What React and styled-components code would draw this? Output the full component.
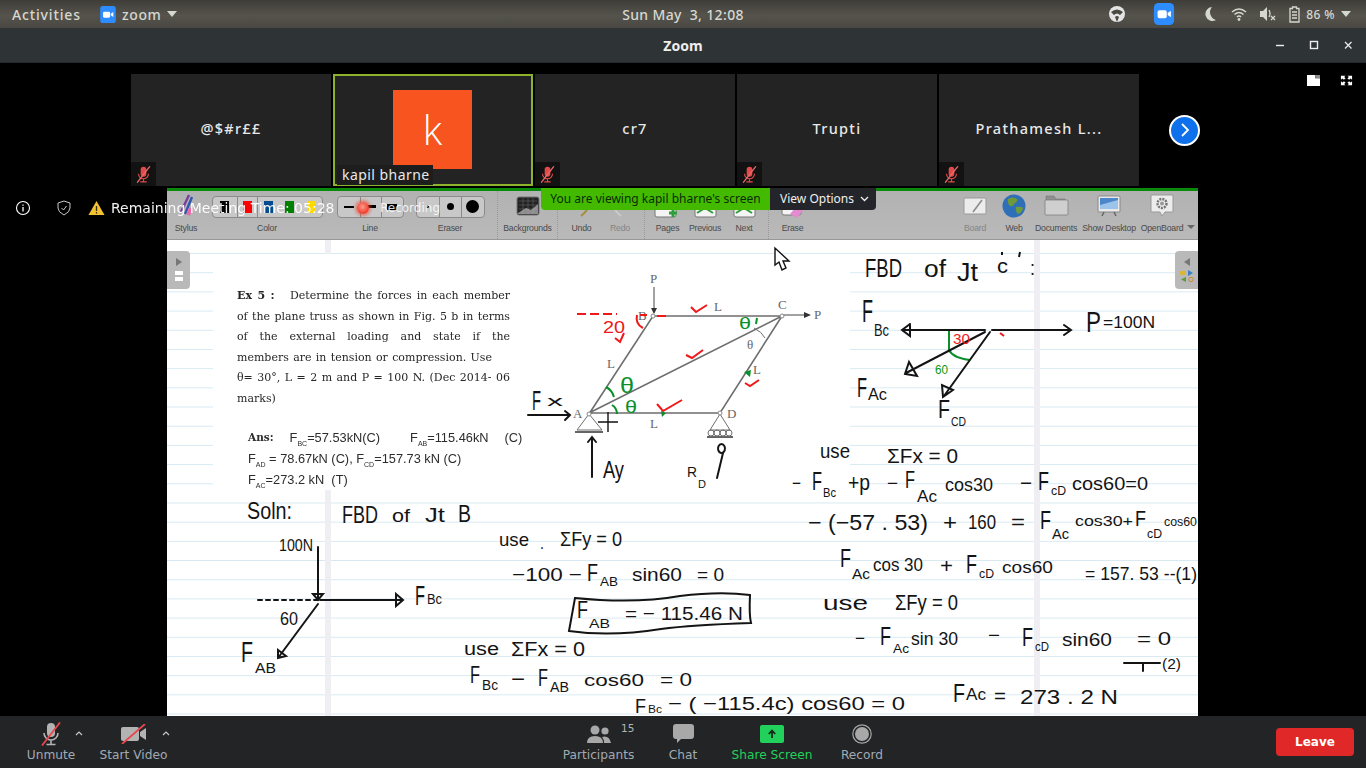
import React from 'react';
import styled, { createGlobalStyle } from 'styled-components';

const GlobalStyle = createGlobalStyle`
  html, body {
    margin: 0;
    background: #000;
    overflow: hidden;
  }
  #root {
    width: 1366px;
    height: 768px;
  }
`;

const Screen = styled.div`
  display: flex;
  flex-direction: column;
  width: 1366px;
  height: 768px;
  background: #000;
  font-family: "DejaVu Sans", sans-serif;
`;

/* gnome top bar */
const TopBar = styled.div`
  position: relative;
  display: flex;
  align-items: center;
  height: 28px;
  padding-left: 12px;
  background: linear-gradient(#3f3d38, #55534c 55%, #4a4842);
  color: #d6d8d0;
  font-family: "Noto Sans", sans-serif;
  font-size: 14px;
  font-weight: 500;
`;

const AppName = styled.span`
  margin-left: 6px;
  letter-spacing: 0.6px;
`;

const Activities = styled.span`
  width: 88px;
  letter-spacing: 0.85px;
`;

const Clock = styled.span`
  position: absolute;
  left: 0;
  right: 0;
  top: 5px;
  text-align: center;
  letter-spacing: 0.35px;
  white-space: pre;
`;

const Tray = styled.div`
  display: flex;
  align-items: center;
  margin-left: auto;
`;

const TrayPercent = styled.span`
  margin-left: 6px;
  font-size: 12px;
  letter-spacing: 0.4px;
`;

const TitleBar = styled.div`
  position: relative;
  display: flex;
  align-items: center;
  justify-content: flex-end;
  height: 35px;
  padding-right: 10px;
  gap: 19px;
  background: #2e3436;
  color: #eeeeec;
  border-bottom: 1px solid #23282a;
  box-sizing: border-box;
`;

const WindowTitle = styled.span`
  position: absolute;
  left: 0;
  right: 0;
  text-align: center;
  font-family: "Noto Sans", sans-serif;
  font-size: 14px;
  font-weight: 700;
`;

/* meeting area */
const Meeting = styled.div`
  position: relative;
  flex: 1;
  display: flex;
  flex-direction: column;
  min-height: 0;
`;

const Strip = styled.div`
  display: flex;
  align-items: center;
  gap: 2px;
  height: 112px;
  margin-top: 11px;
  padding-left: 131px;
`;

const Tile = styled.div`
  position: relative;
  display: flex;
  justify-content: center;
  align-items: ${({ $active }) => ($active ? 'flex-start' : 'center')};
  width: 200px;
  height: 112px;
  box-sizing: border-box;
  background: #232323;
  border: ${({ $active }) => ($active ? '2px solid #8db32c' : 'none')};
  padding: ${({ $active }) => ($active ? '14px 1px 0 0' : '0 0 4px 0')};
  color: #e8e8e8;
  font-size: 14.5px;
  font-weight: 500;
  font-family: "Noto Sans", sans-serif;
  letter-spacing: 1.3px;
`;

const Avatar = styled.div`
  display: flex;
  align-items: center;
  justify-content: center;
  width: 79px;
  height: 79px;
  background: #f7541f;
  color: #fff;
  font-family: "Open Sans", sans-serif;
  font-size: 40px;
  font-weight: 300;
  letter-spacing: 0;
`;

const NameTag = styled.span`
  position: absolute;
  left: 2px;
  bottom: -1px;
  padding: 0 3px 0 5px;
  height: 20px;
  line-height: 20px;
  background: #1d1d1d;
  font-weight: 400;
  font-size: 14px;
  letter-spacing: 0.45px;
`;

const MuteBadge = styled.div`
  position: absolute;
  left: 0;
  bottom: 0;
  display: flex;
  align-items: center;
  justify-content: center;
  width: 25px;
  height: 24px;
  background: #121212;
`;

const NextButton = styled.div`
  display: flex;
  align-items: center;
  justify-content: center;
  width: 31px;
  height: 31px;
  margin-left: 28px;
  border-radius: 50%;
  border: 2px solid #fff;
  box-sizing: border-box;
  background: #0e71eb;
`;

const ViewIcons = styled.div`
  display: flex;
  gap: 20px;
  align-self: flex-start;
  margin-left: auto;
  margin-right: 13px;
  margin-top: 1px;
`;

/* shared screen */
const Share = styled.div`
  position: relative;
  flex: 1;
  display: flex;
  flex-direction: column;
  width: 1031px;
  margin: 2px 0 0 167px;
  border-top: 3px solid #0a8a0a;
  min-height: 0;
`;

const Banner = styled.div`
  position: absolute;
  left: 374px;
  top: -3px;
  display: flex;
  height: 22px;
  z-index: 3;
  font-family: "Noto Sans", sans-serif;
  font-size: 12px;
  line-height: 22px;
`;

const BannerText = styled.span`
  width: 229px;
  text-align: center;
  background: #43ba00;
  color: #0c2d00;
  border-radius: 0 0 0 4px;
`;

const BannerAction = styled.span`
  display: flex;
  align-items: center;
  gap: 6px;
  width: 106px;
  padding-left: 10px;
  box-sizing: border-box;
  background: #23252a;
  color: #f0f0f0;
  border-radius: 0 0 4px 0;
`;

const Toolbar = styled.div`
  display: flex;
  height: 48px;
  background: linear-gradient(#b2b2b2, #b9b9b9);
  border-bottom: 1px solid #979797;
  flex-shrink: 0;
`;

const Tool = styled.div`
  display: flex;
  flex-direction: column;
  align-items: center;
  flex-shrink: 0;
  width: ${({ $w }) => $w}px;
  margin-left: ${({ $ml }) => $ml || 0}px;
  box-sizing: border-box;
  border-left: ${({ $divider }) => ($divider ? '1px dotted #999' : 'none')};
`;

const ToolIcon = styled.div`
  display: flex;
  align-items: center;
  justify-content: center;
  height: 29px;
  margin-bottom: 2px;
`;

const ToolLabel = styled.span`
  font-family: "Liberation Sans", sans-serif;
  font-size: 8.7px;
  letter-spacing: -0.2px;
  line-height: 12px;
  white-space: nowrap;
  color: ${({ $dim }) => ($dim ? '#858585' : '#4a4a4a')};
`;

const RightTools = styled.div`
  display: flex;
  margin-left: auto;
`;

const MoreArrow = styled.span`
  align-self: flex-end;
  width: 0;
  height: 0;
  margin: 0 3px 10px 2px;
  border: 4px solid transparent;
  border-top: 4px solid #666;
  border-bottom: none;
`;

const BtnGroup = styled.div`
  display: flex;
  height: 22px;
  margin-top: 2px;
  box-sizing: border-box;
  border: 1px solid #8b8b8b;
  border-radius: 4px;
  background: #c8c8c8;
`;

const BtnSeg = styled.div`
  display: flex;
  align-items: center;
  justify-content: center;
  width: ${({ $w }) => $w}px;
  box-sizing: border-box;
  border-left: ${({ $plain }) => ($plain ? 'none' : '1px solid #8b8b8b')};
`;

const Swatch = styled.span`
  width: 9px;
  height: 12px;
  background: ${({ $c }) => $c};
`;

const Dot = styled.span`
  width: ${({ $s }) => $s}px;
  height: ${({ $s }) => $s}px;
  border-radius: 50%;
  background: #000;
`;

const Stroke = styled.span`
  width: ${({ $w }) => $w}px;
  height: ${({ $h }) => $h}px;
  background: #000;
`;

const Board = styled.div`
  position: relative;
  flex: 1;
  overflow: hidden;
  background-color: #fff;
  background-image: linear-gradient(#fff 18.2px, #d8e9f2 18.2px);
  background-size: 100% 19.2px;
  background-position: 0 -5.2px;
`;

const PageBand = styled.div`
  position: absolute;
  top: 0;
  bottom: 0;
  left: ${({ $x }) => $x}px;
  width: 6px;
  background: #efeef3;
`;

const SidePanelTab = styled.div`
  position: absolute;
  top: 11px;
  ${({ $side }) => $side}: 0;
  display: flex;
  flex-direction: column;
  align-items: center;
  justify-content: center;
  gap: 4px;
  width: 23px;
  height: 38px;
  background: #b9b9b9;
  border-radius: ${({ $side }) => ($side === 'left' ? '0 4px 4px 0' : '4px 0 0 4px')};
`;

/* page from the lecture notes, pasted on the board */
const DocPatch = styled.div`
  position: absolute;
  left: 46px;
  top: 14px;
  width: 637px;
  height: 236px;
  background: #fff;
`;

const DocText = styled.div`
  position: absolute;
  left: 24px;
  top: 32px;
  width: 273px;
  color: #262626;
  font-family: "DejaVu Serif", serif;
  font-size: 11px;
  filter: blur(0.4px);
`;

const DocLine = styled.div`
  height: 20.6px;
  line-height: 20.6px;
  white-space: nowrap;
  text-align-last: ${({ $free }) => ($free ? 'left' : 'justify')};
  width: ${({ $w }) => $w || 273}px;
`;

const AnsBlock = styled.div`
  position: absolute;
  left: 35px;
  top: 173px;
  color: #2c2c2c;
  font-family: "Liberation Sans", sans-serif;
  font-size: 12.8px;
  filter: blur(0.4px);
`;

const AnsLine = styled.div`
  display: flex;
  height: 21px;
  line-height: 21px;
  white-space: nowrap;
  gap: ${({ $gap }) => $gap || 0}px;
`;

const AnsTag = styled.b`
  font-family: "DejaVu Serif", serif;
  font-size: 10.5px;
`;

const AnsForce = styled.span`
  margin-left: ${({ $ml }) => $ml || 0}px;
`;

const Sub = styled.sub`
  font-size: 7px;
  line-height: 0;
`;

const Canvas = styled.svg`
  position: absolute;
  left: 0;
  top: 0;
  width: 1031px;
  height: 476px;
`;

const Ink = styled.text`
  font-family: "Liberation Sans", sans-serif;
  fill: ${({ $c }) => $c || '#141414'};
`;

const PrintLabel = styled.text`
  font-family: "Liberation Serif", serif;
  font-size: 13px;
  fill: #666;
`;

/* overlay row with the meeting info */
const StatusRow = styled.div`
  position: absolute;
  left: 15px;
  top: 135px;
  display: flex;
  align-items: center;
  height: 20px;
  z-index: 2;
  color: #fff;
  font-size: 14px;
  white-space: nowrap;
`;

const StatusText = styled.span`
  margin-left: 6px;
  width: 224px;
  opacity: 0.95;
`;

const RecordDot = styled.span`
  width: 12px;
  height: 12px;
  margin-left: 22px;
  border-radius: 50%;
  background: radial-gradient(circle at 45% 40%, #ff9a8a, #f03a28 70%);
  box-shadow: 0 0 3px 2px rgba(240, 70, 50, 0.55);
`;

const RecordText = styled.span`
  margin-left: 11px;
  font-size: 12px;
  color: rgba(255, 255, 255, 0.85);
`;

/* bottom controls */
const ControlBar = styled.div`
  display: flex;
  height: 52px;
  padding-left: 27px;
  padding-right: 12px;
  background: #232426;
  flex-shrink: 0;
`;

const Control = styled.div`
  position: relative;
  display: flex;
  flex-direction: column;
  align-items: center;
  width: ${({ $w }) => $w}px;
  margin-left: ${({ $ml }) => $ml || 0}px;
  color: ${({ $green }) => ($green ? '#21d15b' : '#a2aab2')};
  font-size: 12.2px;
  white-space: nowrap;
`;

const ControlIcon = styled.div`
  display: flex;
  align-items: center;
  justify-content: center;
  height: 31px;
  margin-bottom: 1px;
  padding-top: 4px;
  box-sizing: border-box;
`;

const Caret = styled.svg`
  position: absolute;
  top: 15px;
  right: ${({ $r }) => $r}px;
`;

const Count = styled.span`
  position: absolute;
  left: 58px;
  top: 6px;
  font-size: 10.5px;
  color: #b4b4b4;
`;

const LeaveButton = styled.button`
  align-self: center;
  width: 78px;
  height: 28px;
  margin-left: auto;
  border: none;
  border-radius: 4px;
  background: #e02828;
  color: #fff;
  font-family: "DejaVu Sans", sans-serif;
  font-size: 12px;
  font-weight: 700;
`;

const MicGlyph = ({ size = 24, color = '#b3b3b3', slash = '#e9474d' }) => (
  <svg width={size} height={size} viewBox="0 0 24 24">
    <rect x="8" y="1" width="8" height="14" rx="4" fill={color} />
    <path d="M5 11a7 7 0 0 0 14 0M12 18v4M7.5 22.5h9" fill="none" stroke={color} strokeWidth="1.6" />
    <path d="M3 23.5 L21 0.5" stroke={slash} strokeWidth="1.8" />
  </svg>
);

const ZoomGlyph = ({ w, h, r }) => (
  <svg width={w} height={h} viewBox="0 0 22 24">
    <rect width="22" height="24" rx={r} fill="#2d8cff" />
    <rect x="4" y="8" width="10" height="8.5" rx="2" fill="#fff" />
    <path d="M15 11l3.5-2.5v7L15 13z" fill="#fff" />
  </svg>
);

/* the page icons of the toolbar, half hidden by the green banner */
const PageGlyph = ({ w = 23, accent = '#2f9e3a' }) => (
  <svg width={w} height="26" viewBox="0 0 23 26">
    <rect x="1" y="3" width="21" height="21" rx="2" fill="#f4f4f4" stroke="#777" />
    <path d="M3 20l8-5l8 5" fill="none" stroke={accent} strokeWidth="2" />
  </svg>
);

const handwriting = [
  // FBD of joint C
  { t: 'FBD', x: 865, y: 277, w: 37, s: 25 },
  { t: 'of', x: 924, y: 277, w: 22, s: 23 },
  { t: 'Jt', x: 957, y: 281, w: 21, s: 25 },
  { t: 'c', x: 997, y: 273, w: 11, s: 20 },
  { t: ':', x: 1030, y: 275, w: 5, s: 20 },
  { t: 'F', x: 862, y: 322, w: 11, s: 32 },
  { t: 'Bc', x: 874, y: 336, w: 15, s: 16 },
  { t: 'P', x: 1086, y: 332, w: 15, s: 30 },
  { t: '=100N', x: 1103, y: 328, w: 52, s: 16 },
  { t: 'F', x: 857, y: 397, w: 10, s: 28 },
  { t: 'Ac', x: 868, y: 400, w: 19, s: 17 },
  { t: 'F', x: 938, y: 418, w: 12, s: 26 },
  { t: 'CD', x: 951, y: 426, w: 15, s: 13 },
  { t: '30', x: 953, y: 344, w: 17, s: 14, c: '#f01818' },
  { t: '60', x: 935, y: 374, w: 13, s: 12, c: '#0a9a0a' },
  // sum of forces in x at C
  { t: 'use', x: 820, y: 458, w: 30, s: 20 },
  { t: 'ΣFx = 0', x: 887, y: 463, w: 71, s: 20 },
  { t: '−', x: 792, y: 490, w: 9, s: 20 },
  { t: 'F', x: 812, y: 490, w: 10, s: 26 },
  { t: 'Bc', x: 823, y: 497, w: 13, s: 13 },
  { t: '+p', x: 848, y: 490, w: 22, s: 22 },
  { t: '−', x: 887, y: 490, w: 11, s: 20 },
  { t: 'F', x: 905, y: 488, w: 10, s: 24 },
  { t: 'Ac', x: 917, y: 502, w: 20, s: 16 },
  { t: 'cos30', x: 945, y: 491, w: 48, s: 19 },
  { t: '−', x: 1020, y: 489, w: 12, s: 18 },
  { t: 'F', x: 1038, y: 490, w: 11, s: 26 },
  { t: 'cD', x: 1051, y: 495, w: 15, s: 13 },
  { t: 'cos60=0', x: 1072, y: 490, w: 76, s: 18 },
  { t: '− (−57 . 53)', x: 808, y: 530, w: 120, s: 22 },
  { t: '+', x: 943, y: 530, w: 14, s: 22 },
  { t: '160', x: 968, y: 529, w: 28, s: 20 },
  { t: '=', x: 1011, y: 529, w: 14, s: 20 },
  { t: 'F', x: 1040, y: 529, w: 11, s: 26 },
  { t: 'Ac', x: 1052, y: 539, w: 17, s: 15 },
  { t: 'cos30+', x: 1075, y: 526, w: 58, s: 15 },
  { t: 'F', x: 1135, y: 526, w: 11, s: 22 },
  { t: 'cD', x: 1147, y: 538, w: 15, s: 13 },
  { t: 'cos60', x: 1164, y: 526, w: 33, s: 13 },
  { t: 'F', x: 840, y: 567, w: 11, s: 26 },
  { t: 'Ac', x: 852, y: 579, w: 18, s: 15 },
  { t: 'cos 30', x: 873, y: 571, w: 50, s: 18 },
  { t: '+', x: 940, y: 573, w: 13, s: 20 },
  { t: 'F', x: 966, y: 573, w: 11, s: 26 },
  { t: 'cD', x: 979, y: 578, w: 15, s: 13 },
  { t: 'cos60', x: 1002, y: 573, w: 51, s: 17 },
  { t: '= 157. 53 --(1)', x: 1085, y: 580, w: 112, s: 19 },
  { t: 'use', x: 823, y: 610, w: 45, s: 20 },
  { t: 'ΣFy = 0', x: 895, y: 610, w: 63, s: 22 },
  { t: '−', x: 855, y: 645, w: 10, s: 20 },
  { t: 'F', x: 880, y: 645, w: 11, s: 26 },
  { t: 'Ac', x: 893, y: 653, w: 16, s: 13 },
  { t: 'sin 30', x: 911, y: 645, w: 47, s: 19 },
  { t: '−', x: 988, y: 642, w: 12, s: 20 },
  { t: 'F', x: 1022, y: 646, w: 11, s: 26 },
  { t: 'cD', x: 1035, y: 651, w: 14, s: 13 },
  { t: 'sin60', x: 1062, y: 646, w: 50, s: 18 },
  { t: '= 0', x: 1137, y: 645, w: 34, s: 18 },
  { t: '(2)', x: 1162, y: 669, w: 19, s: 15 },
  { t: 'F', x: 953, y: 702, w: 12, s: 26 },
  { t: 'Ac', x: 966, y: 700, w: 20, s: 16 },
  { t: '=', x: 994, y: 703, w: 12, s: 20 },
  { t: '273 . 2 N', x: 1020, y: 704, w: 98, s: 21 },
  // FBD of joint B
  { t: 'Soln:', x: 247, y: 519, w: 45, s: 24 },
  { t: 'FBD', x: 342, y: 523, w: 36, s: 24 },
  { t: 'of', x: 392, y: 522, w: 18, s: 18 },
  { t: 'Jt', x: 425, y: 522, w: 20, s: 20 },
  { t: 'B', x: 458, y: 522, w: 13, s: 24 },
  { t: '100N', x: 279, y: 551, w: 34, s: 17 },
  { t: 'F', x: 415, y: 605, w: 10, s: 28 },
  { t: 'Bc', x: 427, y: 604, w: 15, s: 14 },
  { t: '60', x: 280, y: 625, w: 18, s: 18 },
  { t: 'F', x: 241, y: 662, w: 12, s: 30 },
  { t: 'AB', x: 255, y: 673, w: 21, s: 15 },
  { t: 'use', x: 499, y: 546, w: 30, s: 19 },
  { t: '.', x: 540, y: 549, w: 4, s: 16 },
  { t: 'ΣFy = 0', x: 560, y: 546, w: 62, s: 20 },
  { t: '−100 −', x: 512, y: 581, w: 70, s: 19 },
  { t: 'F', x: 587, y: 581, w: 11, s: 24 },
  { t: 'AB', x: 600, y: 586, w: 18, s: 13 },
  { t: 'sin60', x: 632, y: 581, w: 50, s: 19 },
  { t: '= 0', x: 697, y: 581, w: 27, s: 18 },
  { t: 'F', x: 577, y: 618, w: 11, s: 24 },
  { t: 'AB', x: 589, y: 628, w: 21, s: 13 },
  { t: '= − 115.46 N', x: 625, y: 620, w: 118, s: 19 },
  { t: 'use', x: 464, y: 655, w: 35, s: 18 },
  { t: 'ΣFx = 0', x: 511, y: 656, w: 74, s: 21 },
  { t: 'F', x: 470, y: 683, w: 10, s: 24 },
  { t: 'Bc', x: 482, y: 690, w: 16, s: 15 },
  { t: '−', x: 511, y: 685, w: 14, s: 18 },
  { t: 'F', x: 538, y: 686, w: 10, s: 24 },
  { t: 'AB', x: 550, y: 692, w: 19, s: 14 },
  { t: 'cos60', x: 584, y: 686, w: 60, s: 17 },
  { t: '= 0', x: 660, y: 686, w: 32, s: 18 },
  { t: 'F', x: 635, y: 713, w: 11, s: 21 },
  { t: 'Bc', x: 648, y: 713, w: 14, s: 11 },
  { t: '− ( −115.4c) cos60 = 0', x: 668, y: 710, w: 237, s: 19 },
  // labels round the printed truss
  { t: 'F', x: 532, y: 410, w: 9, s: 28 },
  { t: 'x', x: 547, y: 406, w: 16, s: 14 },
  { t: 'Ay', x: 603, y: 478, w: 21, s: 24 },
  { t: 'R', x: 687, y: 477, w: 10, s: 14 },
  { t: 'D', x: 698, y: 488, w: 8, s: 11 },
  { t: '20', x: 603, y: 333, w: 22, s: 17, c: '#f01818' },
  { t: 'θ', x: 620, y: 393, w: 14, s: 22, c: '#0a8f2a' },
  { t: 'θ', x: 625, y: 413, w: 12, s: 18, c: '#0a8f2a' },
  { t: 'θ', x: 739, y: 329, w: 12, s: 17, c: '#0a8f2a' },
];

const printLabels = [
  ['P', 650, 283], ['P', 814, 319], ['A', 573, 418], ['B', 638, 320],
  ['C', 778, 309], ['D', 727, 418], ['L', 607, 368], ['L', 714, 311],
  ['L', 753, 374], ['L', 650, 428], ['θ', 747, 349],
];

const redMarks = [
  'M691 307l5 5l11-7', 'M686 355l6 3l11-8', 'M657 404l6 7l19-11',
  'M745 383l5 3l9-6', 'M615 338l5 4l4-9', 'M637 315q-2 9 6 13',
  'M1000 333l4 3',
];

const BoardDrawing = () => (
  <Canvas viewBox="167 240 1031 476">
    {/* printed truss */}
    <g stroke="#6e6e6e" strokeWidth="1.6" fill="none">
      <path d="M589 414L653 316H782L720 413H589L782 316" />
      <path d="M589 414l-12 16h25zM720 414l-10 16h20z" strokeWidth="1" />
      <path d="M575 432h28M707 437h26" stroke="#333" strokeWidth="1.4" />
      <path d="M754 328q8 4 11 10" strokeWidth="1" />
      <path d="M654 287v21M782 315h22" stroke="#444" strokeWidth="1" />
      <circle cx="711" cy="433" r="3" strokeWidth="1" />
      <circle cx="717" cy="433" r="3" strokeWidth="1" />
      <circle cx="723" cy="433" r="3" strokeWidth="1" />
      <circle cx="729" cy="433" r="3" strokeWidth="1" />
    </g>
    <path d="M654 314l-3-6h6zM811 315l-7-3v6z" fill="#333" />
    <g fill="#fff" stroke="#888">
      <circle cx="589" cy="414" r="2" />
      <circle cx="653" cy="316" r="2" />
      <circle cx="782" cy="316" r="2" />
      <circle cx="720" cy="413" r="2" />
    </g>
    {printLabels.map(([t, x, y], i) => (
      <PrintLabel key={i} x={x} y={y}>{t}</PrintLabel>
    ))}

    {/* red and green marks on the printed figure */}
    <g stroke="#f01818" strokeWidth="2" fill="none">
      {redMarks.map((d) => <path key={d} d={d} />)}
      <path d="M577 314h40" strokeDasharray="9 4" />
      <path d="M640 315h7M657 316h9" />
    </g>
    <g stroke="#0a8f2a" strokeWidth="2" fill="none">
      <path d="M606 387q6 3 8 10M612 405q5 3 5 9M757 318l-1 6" />
      <path d="M949 330v20q4 8 21 10" />
    </g>
    <path d="M744 372l7-2l-1 7zM661 411l5 2l-4 4z" fill="#0a8f2a" />

    {/* black pen strokes */}
    <g stroke="#141414" strokeWidth="2" fill="none" strokeLinecap="round">
      <path d="M528 415h42M565 411l5 4l-5 5" />
      <path d="M592 477V438M588 442l4-5l4 5" />
      <path d="M717 478l6-25M722 453a3.5 4.5 0 1 0-1 0" />
      <path d="M985 330H902M910 324l-8 6l8 6v-12" />
      <path d="M992 330h78M1064 325l7 5l-7 5" />
      <path d="M985 332l-79 41M909 362l-4 12l12 2z" />
      <path d="M990 332l-46 64M942 385l1 12l10-7z" />
      <path d="M318 547v52M313 594l5 6l5-6z" />
      <path d="M320 600h82M396 594l7 6l-7 6z" />
      <path d="M258 600h60" strokeDasharray="4 4" />
      <path d="M318 604l-40 54M278 650v8l8-2z" />
      <path d="M575 598q60 6 105-2q40-5 70-1q-1 20 1 28q-60 2-90 6q-50 8-92 2z" />
      <path d="M1124 663h36M1143 664v7" />
    </g>
    <path d="M1002 252v3M1020 252l-1 5" stroke="#141414" strokeWidth="2" />

    {handwriting.map(({ t, x, y, w, s, c }, i) => (
      <Ink key={i} x={x} y={y} fontSize={s} textLength={w} lengthAdjust="spacingAndGlyphs" $c={c}>
        {t}
      </Ink>
    ))}

    {/* tool cursor and mouse pointer */}
    <path d="M608 412v20M598 422h20" stroke="#111" strokeWidth="1.4" />
    <path d="M775 248v17l4-3l3 8l4-2l-3-7h6z" fill="#fff" stroke="#111" strokeWidth="1.4" />
  </Canvas>
);

const thumbs = ['@$#r££', null, 'cr7', 'Trupti', 'Prathamesh L...'];

const App = () => (
  <Screen>
    <GlobalStyle />
    <TopBar>
      <Activities>Activities</Activities>
      <ZoomGlyph w={16} h={17} r={4} />
      <AppName>zoom</AppName>
      <svg width="10" height="6" style={{ marginLeft: 6 }}>
        <path d="M0 0h10L5 6z" fill="#d6d8d0" />
      </svg>
      <Clock>Sun May  3, 12:08</Clock>
      <Tray>
        <svg width="18" height="18" viewBox="0 0 18 18" style={{ marginRight: 27 }}>
          <circle cx="9" cy="9" r="8" fill="#e4e4e4" />
          <path d="M3 7q6-5 12 0l-3 3q-3-3-6 0zM7 12q2-2 4 0l-2 5z" fill="#4a4842" />
        </svg>
        <ZoomGlyph w={22} h={22} r={5} />
        <svg width="14" height="16" viewBox="0 0 14 16" style={{ marginLeft: 28 }}>
          <path d="M9 1a7 7 0 1 0 4 13A8 8 0 0 1 9 1z" fill="#d6d8d0" />
        </svg>
        <svg width="16" height="14" viewBox="0 0 16 14" style={{ marginLeft: 14 }}>
          <path d="M1 5q7-6 14 0M3.5 7.5q4.5-4 9 0M6 10q2-2 4 0" fill="none" stroke="#d6d8d0" strokeWidth="1.6" />
          <circle cx="8" cy="12.5" r="1.4" fill="#d6d8d0" />
        </svg>
        <svg width="18" height="16" viewBox="0 0 18 16" style={{ marginLeft: 12 }}>
          <path d="M1 5h3l4-4v14l-4-4H1z" fill="#d6d8d0" />
          <path d="M10 4q2 4 0 7M12 10l4 4M16 10l-4 4" fill="none" stroke="#d6d8d0" strokeWidth="1.3" />
        </svg>
        <svg width="11" height="17" viewBox="0 0 11 17" style={{ marginLeft: 12 }}>
          <path d="M3.5 1h4v1.5H10V16H1V2.5h2.5z" fill="none" stroke="#d6d8d0" strokeWidth="1.3" />
          <path d="M3 6h5M3 9h5M3 12h5" stroke="#d6d8d0" strokeWidth="1.6" />
        </svg>
        <TrayPercent>86 %</TrayPercent>
        <svg width="10" height="6" style={{ marginLeft: 6, marginRight: 15 }}>
          <path d="M0 0h10L5 6z" fill="#d6d8d0" />
        </svg>
      </Tray>
    </TopBar>

    <TitleBar>
      <WindowTitle>Zoom</WindowTitle>
      <svg width="15" height="15" viewBox="0 0 15 15"><path d="M3 7.5h8" stroke="#eee" strokeWidth="1.4" /></svg>
      <svg width="15" height="15" viewBox="0 0 15 15"><rect x="3.5" y="3.5" width="7" height="7" fill="none" stroke="#eee" strokeWidth="1.4" /></svg>
      <svg width="15" height="15" viewBox="0 0 15 15"><path d="M4 4l6.5 6.5M10.5 4L4 10.5" stroke="#eee" strokeWidth="1.2" /></svg>
    </TitleBar>

    <Meeting>
      <Strip>
        {thumbs.map((name, i) =>
          name ? (
            <Tile key={i}>
              {name}
              <MuteBadge>
                <MicGlyph size={17} color="#e04a4a" slash="#ef6a6a" />
              </MuteBadge>
            </Tile>
          ) : (
            <Tile key={i} $active>
              <Avatar>k</Avatar>
              <NameTag>kapil bharne</NameTag>
            </Tile>
          ),
        )}
        <NextButton>
          <svg width="12" height="16" viewBox="0 0 12 16">
            <path d="M3 2l6 6l-6 6" fill="none" stroke="#fff" strokeWidth="1.8" />
          </svg>
        </NextButton>
        <ViewIcons>
          <svg width="13" height="11" viewBox="0 0 14 14" preserveAspectRatio="none">
            <path d="M0 0h9v4h5v10H0z" fill="#fff" />
            <rect x="9" y="0" width="5" height="4" fill="#8c8c8c" />
          </svg>
          <svg width="13" height="11" viewBox="0 0 14 14" fill="#fff" preserveAspectRatio="none">
            <path d="M1 1h5L4.4 2.6L6 4.2L4.2 6L2.6 4.4L1 6zM13 1v5L11.4 4.4L9.8 6L8 4.2L9.6 2.6L8 1zM1 13V8l1.6 1.6L4.2 8L6 9.8L4.4 11.4L6 13zM13 13H8l1.6-1.6L8 9.8L9.8 8l1.6 1.6L13 8z" />
          </svg>
        </ViewIcons>
      </Strip>

      <StatusRow>
        <svg width="16" height="16" viewBox="0 0 16 16" fill="none" stroke="#fff">
          <circle cx="8" cy="8" r="6.5" strokeWidth="1.1" />
          <path d="M8 7v4.5M8 4.5v1.3" strokeWidth="1.3" />
        </svg>
        <svg width="14" height="16" viewBox="0 0 14 16" fill="none" stroke="#c8c8c8" strokeWidth="1" style={{ marginLeft: 26 }}>
          <path d="M7 1l6 2v5q0 4-6 7q-6-3-6-7V3z" />
          <path d="M4.5 8l2 2l3-4" />
        </svg>
        <svg width="17" height="16" viewBox="0 0 17 16" style={{ marginLeft: 17 }}>
          <path d="M8.5 1L16.5 15H.5z" fill="#f2c230" />
          <path d="M8.5 6v5M8.5 12v1.6" stroke="#3a2c00" strokeWidth="1.3" />
        </svg>
        <StatusText>Remaining Meeting Time: 05:28</StatusText>
        <RecordDot />
        <RecordText>Recording</RecordText>
      </StatusRow>

      <Share>
        <Banner>
          <BannerText>You are viewing kapil bharne's screen</BannerText>
          <BannerAction>
            View Options
            <svg width="9" height="6" viewBox="0 0 9 6">
              <path d="M1 1l3.5 3.5L8 1" fill="none" stroke="#f0f0f0" strokeWidth="1.3" />
            </svg>
          </BannerAction>
        </Banner>

        <Toolbar>
          <Tool $w={38}>
            <ToolIcon>
              <svg width="24" height="27" viewBox="0 0 24 27" fill="none" strokeWidth="2.4">
                <path d="M7 20L15 3" stroke="#7a3f9a" />
                <path d="M11 22L18 5" stroke="#3058b0" />
                <path d="M14 23l3-7" stroke="#e86aa6" strokeWidth="4" />
              </svg>
            </ToolIcon>
            <ToolLabel>Stylus</ToolLabel>
          </Tool>
          <Tool $w={120} $ml={2}>
            <ToolIcon>
              <BtnGroup>
                <BtnSeg $w={24} $plain><Swatch $c="#000" /></BtnSeg>
                <BtnSeg $w={20}><Swatch $c="#f00" /></BtnSeg>
                <BtnSeg $w={22}><Swatch $c="#004a8f" /></BtnSeg>
                <BtnSeg $w={22} $plain><Swatch $c="#008000" /></BtnSeg>
                <BtnSeg $w={21} $plain><Swatch $c="#ffd800" /></BtnSeg>
              </BtnGroup>
            </ToolIcon>
            <ToolLabel>Color</ToolLabel>
          </Tool>
          <Tool $w={78} $ml={4}>
            <ToolIcon>
              <BtnGroup>
                <BtnSeg $w={22} $plain><Stroke $w={10} $h={2} /></BtnSeg>
                <BtnSeg $w={21}><Stroke $w={10} $h={3} /></BtnSeg>
                <BtnSeg $w={22}><Stroke $w={10} $h={6} /></BtnSeg>
              </BtnGroup>
            </ToolIcon>
            <ToolLabel>Line</ToolLabel>
          </Tool>
          <Tool $w={74} $ml={4}>
            <ToolIcon>
              <BtnGroup>
                <BtnSeg $w={22} $plain><Dot $s={3} /></BtnSeg>
                <BtnSeg $w={22}><Dot $s={7} /></BtnSeg>
                <BtnSeg $w={23}><Dot $s={13} /></BtnSeg>
              </BtnGroup>
            </ToolIcon>
            <ToolLabel>Eraser</ToolLabel>
          </Tool>
          <Tool $w={60} $ml={10} $divider>
            <ToolIcon>
              <svg width="24" height="20" viewBox="0 0 24 20">
                <rect x="1" y="1" width="22" height="18" rx="2" fill="#222" stroke="#777" />
                <path d="M3 5h18M3 9h18M3 13h18M7 2v16M12 2v16M17 2v16" stroke="#666" strokeWidth="0.6" />
                <path d="M2 17l8-5l5 2l7-6v10H2z" fill="#bbb" opacity="0.7" />
              </svg>
            </ToolIcon>
            <ToolLabel>Backgrounds</ToolLabel>
          </Tool>
          <Tool $w={48} $divider>
            <ToolIcon>
              <svg width="24" height="26" viewBox="0 0 24 26">
                <path d="M18 10q2 6-7 13" fill="none" stroke="#a88f3c" strokeWidth="2" />
              </svg>
            </ToolIcon>
            <ToolLabel>Undo</ToolLabel>
          </Tool>
          <Tool $w={30}>
            <ToolIcon>
              <svg width="24" height="26" viewBox="0 0 24 26">
                <path d="M6 10q-2 6 7 13" fill="none" stroke="#c9c9c9" strokeWidth="2" />
              </svg>
            </ToolIcon>
            <ToolLabel $dim>Redo</ToolLabel>
          </Tool>
          <Tool $w={46} $ml={9} $divider>
            <ToolIcon>
              <svg width="27" height="26" viewBox="0 0 27 26">
                <rect x="1" y="3" width="21" height="21" rx="2" fill="#f4f4f4" stroke="#777" />
                <path d="M19 16v8M15 20h8" stroke="#2f9e3a" strokeWidth="3" />
              </svg>
            </ToolIcon>
            <ToolLabel>Pages</ToolLabel>
          </Tool>
          <Tool $w={30}>
            <ToolIcon><PageGlyph /></ToolIcon>
            <ToolLabel>Previous</ToolLabel>
          </Tool>
          <Tool $w={48}>
            <ToolIcon><PageGlyph /></ToolIcon>
            <ToolLabel>Next</ToolLabel>
          </Tool>
          <Tool $w={48} $divider>
            <ToolIcon>
              <svg width="24" height="26" viewBox="0 0 24 26">
                <rect x="1" y="3" width="19" height="19" rx="2" fill="#f4f4f4" stroke="#777" />
                <path d="M15 14l7 3l-6 8l-7-4z" fill="#e58ad0" />
              </svg>
            </ToolIcon>
            <ToolLabel>Erase</ToolLabel>
          </Tool>
          <RightTools>
            <Tool $w={40}>
              <ToolIcon>
                <svg width="24" height="18" viewBox="0 0 24 18">
                  <rect x="1" y="1" width="22" height="16" rx="1" fill="#ececec" stroke="#999" />
                  <path d="M10 15L19 3" stroke="#8a8a8a" strokeWidth="1.5" />
                </svg>
              </ToolIcon>
              <ToolLabel $dim>Board</ToolLabel>
            </Tool>
            <Tool $w={38}>
              <ToolIcon>
                <svg width="24" height="24" viewBox="0 0 24 24">
                  <circle cx="12" cy="12" r="11.5" fill="#2f6fb8" />
                  <path d="M6 5q5-3 9 0q1 3-3 5q-1 3-4 2q-3-3-2-7zM14 13q5-1 7 1q-1 5-5 6q-3-3-2-7z" fill="#6f9a3a" />
                </svg>
              </ToolIcon>
              <ToolLabel>Web</ToolLabel>
            </Tool>
            <Tool $w={46}>
              <ToolIcon>
                <svg width="25" height="21" viewBox="0 0 25 21">
                  <path d="M2 1h8l2 3h9v4H2z" fill="#8f8f8f" stroke="#777" strokeWidth="0.6" />
                  <rect x="1" y="5" width="23" height="15" rx="1" fill="#cfcfcf" stroke="#777" strokeWidth="0.7" />
                </svg>
              </ToolIcon>
              <ToolLabel>Documents</ToolLabel>
            </Tool>
            <Tool $w={60}>
              <ToolIcon>
                <svg width="24" height="22" viewBox="0 0 24 22">
                  <rect x="1" y="1" width="22" height="16" rx="1" fill="#e8e8e8" stroke="#888" />
                  <rect x="3" y="3" width="18" height="11" fill="#4d86c9" />
                  <path d="M3 10l18-5v9H3z" fill="#9cc3ea" />
                  <path d="M5 21l2-4M19 21l-2-4" stroke="#666" strokeWidth="1.5" />
                </svg>
              </ToolIcon>
              <ToolLabel>Show Desktop</ToolLabel>
            </Tool>
            <Tool $w={46}>
              <ToolIcon>
                <svg width="24" height="23" viewBox="0 0 24 23">
                  <path d="M2 1h20a1 1 0 0 1 1 1v15a1 1 0 0 1-1 1h-7l-3 4l-2-4H2a1 1 0 0 1-1-1V2a1 1 0 0 1 1-1z" fill="#ececec" stroke="#999" />
                  <circle cx="12" cy="9.5" r="4.5" fill="none" stroke="#777" strokeWidth="2.4" strokeDasharray="2 1" />
                  <circle cx="12" cy="9.5" r="2" fill="#999" />
                </svg>
              </ToolIcon>
              <ToolLabel>OpenBoard</ToolLabel>
            </Tool>
            <MoreArrow />
          </RightTools>
        </Toolbar>

        <Board>
          <PageBand $x={158} />
          <PageBand $x={867} />
          <DocPatch>
            <DocText>
              <DocLine>
                <b>Ex 5 :</b>&nbsp;&nbsp;&nbsp;Determine the forces in each member
              </DocLine>
              <DocLine>of the plane truss as shown in Fig. 5 b in terms</DocLine>
              <DocLine>of the external loading and state if the</DocLine>
              <DocLine $w={255}>members are in tension or compression. Use</DocLine>
              <DocLine>θ= 30°, L = 2 m and P = 100 N. (Dec 2014- 06</DocLine>
              <DocLine $free>marks)</DocLine>
            </DocText>
            <AnsBlock>
              <AnsLine $gap={16}>
                <AnsTag>Ans:</AnsTag>
                <span>F<Sub>BC</Sub>=57.53kN(C)</span>
                <AnsForce $ml={14}>F<Sub>AB</Sub>=115.46kN</AnsForce>
                <span>(C)</span>
              </AnsLine>
              <AnsLine><span>F<Sub>AD</Sub> = 78.67kN (C), F<Sub>CD</Sub>=157.73 kN (C)</span></AnsLine>
              <AnsLine><span>F<Sub>AC</Sub>=273.2 kN&nbsp;&nbsp;(T)</span></AnsLine>
            </AnsBlock>
          </DocPatch>
          <SidePanelTab $side="left">
            <svg width="8" height="8"><path d="M1 0l6 4l-6 4z" fill="#777" /></svg>
            <svg width="8" height="12"><path d="M0 1h8v4H0zM0 7h8v4H0z" fill="#fff" /></svg>
          </SidePanelTab>
          <SidePanelTab $side="right">
            <svg width="8" height="8"><path d="M7 0L1 4l6 4z" fill="#777" /></svg>
            <svg width="14" height="12">
              <rect x="0" y="1" width="6" height="4" fill="#d9b53a" />
              <path d="M8 0l5 3l-5 3z" fill="#3a7fc2" />
              <path d="M6 7L1 9.5L6 12z" fill="#5c9a3a" />
              <circle cx="11" cy="9.5" r="2.2" fill="none" stroke="#d08a2a" />
            </svg>
          </SidePanelTab>
          <BoardDrawing />
        </Board>
      </Share>
    </Meeting>

    <ControlBar>
      <Control $w={48}>
        <ControlIcon><MicGlyph /></ControlIcon>
        Unmute
        <Caret $r={-8} width="8" height="5" viewBox="0 0 8 5"><path d="M1 4l3-3l3 3" fill="none" stroke="#c8c8c8" strokeWidth="1.2" /></Caret>
      </Control>
      <Control $w={67} $ml={25}>
        <ControlIcon>
          <svg width="26" height="20" viewBox="0 0 26 20">
            <rect x="0" y="3" width="18" height="14" rx="2" fill="#b3b3b3" />
            <path d="M19 8l6-4v12l-6-4z" fill="#b3b3b3" />
            <path d="M1 20L24 0" stroke="#e9474d" strokeWidth="1.8" />
          </svg>
        </ControlIcon>
        Start Video
        <Caret $r={-3} width="8" height="5" viewBox="0 0 8 5"><path d="M1 4l3-3l3 3" fill="none" stroke="#c8c8c8" strokeWidth="1.2" /></Caret>
      </Control>
      <Control $w={71} $ml={396}>
        <ControlIcon>
          <svg width="24" height="18" viewBox="0 0 24 18" fill="#a8a8a8">
            <circle cx="8" cy="5" r="4.5" />
            <circle cx="18" cy="6" r="3.6" />
            <path d="M0 18q0-7 8-7t8 7zM17 18q0-4-2-6q7-2 9 6z" />
          </svg>
        </ControlIcon>
        Participants
        <Count>15</Count>
      </Control>
      <Control $w={28} $ml={35}>
        <ControlIcon>
          <svg width="21" height="19" viewBox="0 0 21 19">
            <path d="M3 0h15a3 3 0 0 1 3 3v9a3 3 0 0 1-3 3H8l-4 4v-4H3a3 3 0 0 1-3-3V3a3 3 0 0 1 3-3z" fill="#a8a8a8" />
          </svg>
        </ControlIcon>
        Chat
      </Control>
      <Control $w={80} $ml={35} $green>
        <ControlIcon>
          <svg width="24" height="18" viewBox="0 0 24 18">
            <rect width="24" height="18" rx="2" fill="#21d15b" />
            <path d="M12 13V6M8.8 9L12 5.5L15.2 9" fill="none" stroke="#15261a" strokeWidth="1.8" />
          </svg>
        </ControlIcon>
        Share Screen
      </Control>
      <Control $w={42} $ml={29}>
        <ControlIcon>
          <svg width="20" height="20" viewBox="0 0 20 20">
            <circle cx="10" cy="10" r="9.2" fill="none" stroke="#a8a8a8" strokeWidth="1.2" />
            <circle cx="10" cy="10" r="7" fill="#a8a8a8" />
          </svg>
        </ControlIcon>
        Record
      </Control>
      <LeaveButton>Leave</LeaveButton>
    </ControlBar>
  </Screen>
);

export default App;
